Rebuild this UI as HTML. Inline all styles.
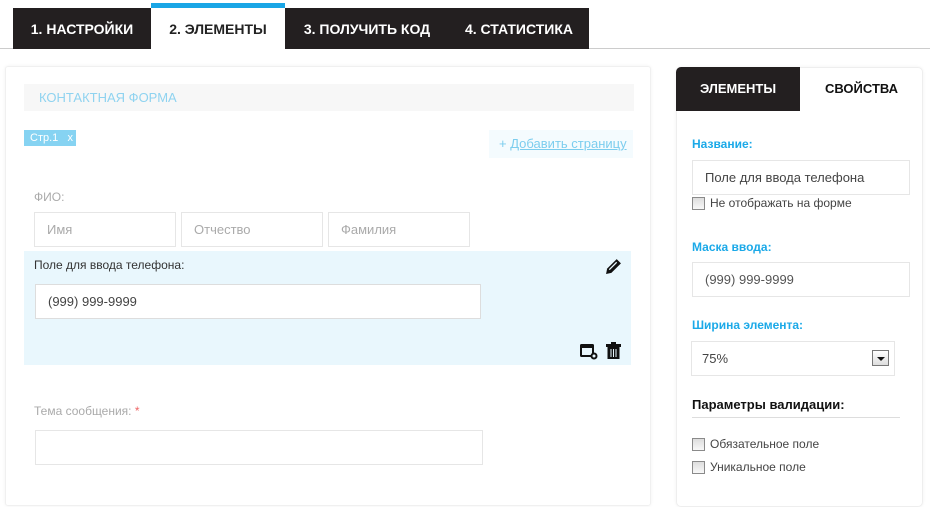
<!DOCTYPE html><html><head><meta charset="utf-8"><style>
*{box-sizing:border-box;margin:0;padding:0}
body{width:930px;height:493px;background:#fff;font-family:"Liberation Sans",Arial,sans-serif;position:relative;overflow:hidden}
.a{position:absolute}
.tab{position:absolute;top:8px;height:40px;line-height:42px;color:#fff;font-weight:bold;font-size:14px;text-align:center}
.inp{position:absolute;border:1px solid #e6e6e6;background:#fff;font-size:13px;color:#aaa;padding-left:12px}
.lb{position:absolute;font-size:12px;color:#aaa}
.bl{position:absolute;font-size:12px;font-weight:bold;color:#1ba9e8}
.cb{position:absolute;width:13px;height:13px;border:1px solid #8a8a8a;background:linear-gradient(#ddd,#f8f8f8)}
.ct{position:absolute;font-size:12px;color:#444}
</style></head><body>
<div class="a" style="left:0;top:48px;width:930px;height:1px;background:#ccc"></div>
<div class="a" style="left:13px;top:8px;width:576px;height:41px;background:#231f20"></div>
<div class="a" style="left:151px;top:3px;width:134px;height:46px;background:#fff;border-top:5px solid #1aa6e6"></div>
<div class="tab" style="left:13px;width:138px">1. НАСТРОЙКИ</div>
<div class="tab" style="left:151px;width:134px;color:#222">2. ЭЛЕМЕНТЫ</div>
<div class="tab" style="left:285px;width:164px">3. ПОЛУЧИТЬ КОД</div>
<div class="tab" style="left:449px;width:140px">4. СТАТИСТИКА</div>

<div class="a" style="left:5px;top:66px;width:646px;height:440px;border:1px solid #f0f0f0;border-radius:3px;box-shadow:0 0 3px rgba(0,0,0,.06)"></div>
<div class="a" style="left:24px;top:84px;width:610px;height:27px;background:#f7f7f7;color:#8fd3f0;font-size:13px;line-height:27px;padding-left:15px">КОНТАКТНАЯ ФОРМА</div>
<div class="a" style="left:24px;top:130px;width:52px;height:16px;background:#86d3f2;color:#fff;font-size:11px;line-height:16px;padding-left:6px">Стр.1 &nbsp; x</div>
<div class="a" style="left:489px;top:130px;width:144px;height:28px;background:#f4fbfe;color:#7ccdee;font-size:13px;line-height:28px;padding-left:10px">+ <u>Добавить страницу</u></div>
<div class="lb" style="left:34px;top:190px">ФИО:</div>
<div class="inp" style="left:34px;top:212px;width:142px;height:35px;line-height:33px">Имя</div>
<div class="inp" style="left:181px;top:212px;width:142px;height:35px;line-height:33px">Отчество</div>
<div class="inp" style="left:328px;top:212px;width:142px;height:35px;line-height:33px">Фамилия</div>

<div class="a" style="left:24px;top:251px;width:607px;height:114px;background:#e9f7fd"></div>
<div class="a" style="left:34px;top:258px;font-size:12px;color:#333">Поле для ввода телефона:</div>
<div class="inp" style="left:35px;top:284px;width:446px;height:35px;line-height:33px;color:#444;border-color:#ddd">(999) 999-9999</div>
<svg class="a" style="left:605px;top:258px" width="17" height="17" viewBox="0 0 16 16"><path d="M11 1l4 4-9 9-5 1 1-5z" fill="#111"/><path d="M4 11l7-7" stroke="#e9f7fd" stroke-width="1.2"/></svg>
<svg class="a" style="left:580px;top:343px" width="18" height="17" viewBox="0 0 18 17"><rect x="0" y="1" width="14" height="13" rx="1.5" fill="#111"/><rect x="2" y="5" width="10" height="7" fill="#e9f7fd"/><circle cx="14" cy="13" r="3.5" fill="#111"/><circle cx="14" cy="13" r="1.5" fill="#e9f7fd"/></svg>
<svg class="a" style="left:606px;top:342px" width="15" height="17" viewBox="0 0 15 17"><rect x="5" y="0" width="5" height="2" fill="#111"/><rect x="0" y="2" width="15" height="3" fill="#111"/><rect x="1.5" y="5" width="12" height="12" fill="#111"/><path d="M5 7v8M7.5 7v8M10 7v8" stroke="#e9f7fd" stroke-width="1"/></svg>

<div class="lb" style="left:34px;top:404px">Тема сообщения: <span style="color:#e66">*</span></div>
<div class="inp" style="left:35px;top:430px;width:448px;height:35px"></div>

<div class="a" style="left:676px;top:67px;width:247px;height:440px;border:1px solid #eee;border-radius:5px;box-shadow:0 0 3px rgba(0,0,0,.06)"></div>
<div class="a" style="left:676px;top:67px;width:124px;height:44px;background:#231f20;border-top-left-radius:5px;color:#fff;font-weight:bold;font-size:13px;line-height:44px;text-align:center">ЭЛЕМЕНТЫ</div>
<div class="a" style="left:800px;top:67px;width:123px;height:44px;color:#111;font-weight:bold;font-size:13px;line-height:44px;text-align:center">СВОЙСТВА</div>
<div class="bl" style="left:692px;top:137px">Название:</div>
<div class="inp" style="left:692px;top:160px;width:218px;height:35px;line-height:33px;color:#444">Поле для ввода телефона</div>
<div class="cb" style="left:692px;top:197px"></div><div class="ct" style="left:710px;top:196px">Не отображать на форме</div>
<div class="bl" style="left:692px;top:240px">Маска ввода:</div>
<div class="inp" style="left:692px;top:262px;width:218px;height:35px;line-height:33px;color:#555">(999) 999-9999</div>
<div class="bl" style="left:692px;top:318px">Ширина элемента:</div>
<div class="inp" style="left:691px;top:341px;width:204px;height:35px;line-height:33px;color:#444;padding-left:10px">75%</div>
<div class="a" style="left:872px;top:350px;width:17px;height:16px;border:1px solid #777;background:linear-gradient(#fff,#ddd)"><div class="a" style="left:4px;top:6px;border-left:4px solid transparent;border-right:4px solid transparent;border-top:4px solid #111"></div></div>
<div class="a" style="left:692px;top:397px;font-size:13px;font-weight:bold;color:#111">Параметры валидации:</div>
<div class="a" style="left:692px;top:417px;width:208px;height:1px;background:#ddd"></div>
<div class="cb" style="left:692px;top:438px"></div><div class="ct" style="left:710px;top:437px">Обязательное поле</div>
<div class="cb" style="left:692px;top:461px"></div><div class="ct" style="left:710px;top:460px">Уникальное поле</div>
</body></html>
